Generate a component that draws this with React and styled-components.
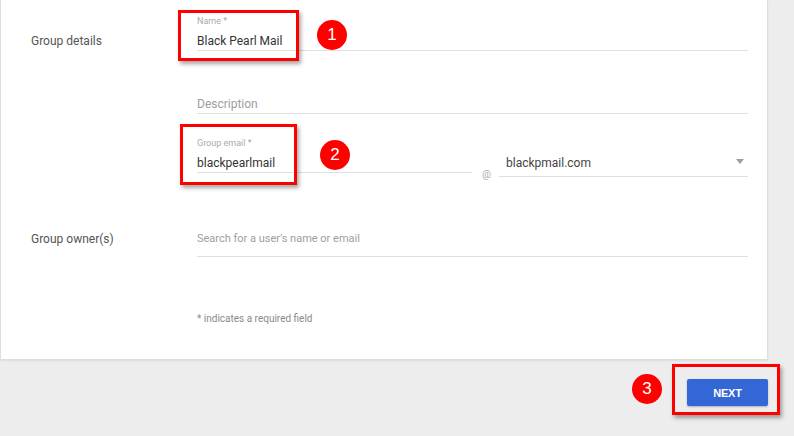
import React from "react";
import styled, { createGlobalStyle } from "styled-components";

const GlobalStyle = createGlobalStyle`
  html, body {
    margin: 0;
    padding: 0;
    background: #ededed;
    font-family: Roboto, "Liberation Sans", Arial, sans-serif;
  }
`;

const Page = styled.div`
  position: relative;
  width: 794px;
  height: 436px;
  overflow: hidden;
  display: flex;
  flex-direction: column;
`;

const Card = styled.div`
  width: 768px;
  background: #fff;
  border: 1px solid #dedede;
  border-top: none;
  border-radius: 0 0 2px 2px;
  box-shadow: 0 1px 2px rgba(0, 0, 0, 0.08);
  padding: 15px 19px 33px 30px;
  box-sizing: border-box;
`;

const Section = styled.div`
  display: grid;
  grid-template-columns: 166px 1fr;
  margin-top: ${(p) => p.$top || 0}px;
`;

const SectionLabel = styled.div`
  font-size: 12px;
  line-height: 18px;
  color: #555;
  padding-top: ${(p) => p.$offset || 0}px;
`;

const Fields = styled.div`
  display: flex;
  flex-direction: column;
`;

const Field = styled.div`
  display: flex;
  flex-direction: column;
  flex: ${(p) => (p.$grow ? 1 : "none")};
  margin-top: ${(p) => p.$top || 0}px;
`;

const FloatLabel = styled.div`
  font-size: 9px;
  line-height: 12px;
  height: 12px;
  color: #aaa;
  margin-bottom: 5px;
`;

const Value = styled.div`
  font-size: ${(p) => p.$size || 12}px;
  line-height: 18px;
  color: ${(p) => (p.$placeholder ? "#9e9e9e" : "#333")};
  padding-bottom: ${(p) => p.$pb || 0}px;
  border-bottom: 1px solid #e0e0e0;
  white-space: nowrap;
`;

const EmailRow = styled.div`
  display: flex;
  align-items: flex-start;
  margin-top: 23px;
`;

const At = styled.div`
  width: 27px;
  padding-top: 32px;
  padding-left: 10px;
  box-sizing: border-box;
  font-size: 10px;
  line-height: 12px;
  color: #aaa;
`;

const Select = styled.div`
  width: 249px;
  margin-top: 17px;
  display: flex;
  align-items: center;
  justify-content: space-between;
  padding: 0 4px 4px 7px;
  box-sizing: border-box;
  font-size: 12px;
  line-height: 18px;
  color: #444;
  border-bottom: 1px solid #e0e0e0;
`;

const Caret = styled.span`
  width: 0;
  height: 0;
  border-left: 4.5px solid transparent;
  border-right: 4.5px solid transparent;
  border-top: 5px solid #9e9e9e;
  margin-top: -4px;
`;

const Note = styled.div`
  font-size: 10px;
  line-height: 14px;
  color: #8a8a8a;
  margin-top: 55px;
`;

const Footer = styled.div`
  display: flex;
  justify-content: flex-end;
  padding: 19px 26px 0 0;
`;

const Button = styled.button`
  width: 81px;
  height: 27px;
  border: none;
  border-radius: 2px;
  background: #3367d6;
  color: #fff;
  font-family: "Liberation Sans", Arial, sans-serif;
  font-weight: 700;
  font-size: 11px;
  letter-spacing: -0.2px;
  box-shadow: 0 1px 2px rgba(0, 0, 0, 0.25);
  cursor: pointer;
`;

const Callout = styled.div`
  position: absolute;
  left: ${(p) => p.$x}px;
  top: ${(p) => p.$y}px;
  width: ${(p) => p.$w}px;
  height: ${(p) => p.$h}px;
  border: 3px solid #f00;
  box-sizing: border-box;
  box-shadow: 2px 3px 4px rgba(0, 0, 0, 0.35);
  pointer-events: none;
`;

const Marker = styled.div`
  position: absolute;
  left: ${(p) => p.$x}px;
  top: ${(p) => p.$y}px;
  width: 30px;
  height: 30px;
  border-radius: 50%;
  background: #f00;
  color: #fff;
  display: flex;
  align-items: center;
  justify-content: center;
  font-family: "Liberation Sans", Arial, sans-serif;
  font-size: 17px;
`;

export default function App() {
  return (
    <>
      <GlobalStyle />
      <Page>
        <Card>
          <Section>
            <SectionLabel $offset={17}>Group details</SectionLabel>
            <Fields>
              <Field>
                <FloatLabel>Name *</FloatLabel>
                <Value>Black Pearl Mail</Value>
              </Field>
              <Field $top={27}>
                <FloatLabel />
                <Value $placeholder>Description</Value>
              </Field>
              <EmailRow>
                <Field $grow>
                  <FloatLabel>Group email *</FloatLabel>
                  <Value>blackpearlmail</Value>
                </Field>
                <At>@</At>
                <Select>
                  blackpmail.com
                  <Caret />
                </Select>
              </EmailRow>
            </Fields>
          </Section>
          <Section $top={49}>
            <SectionLabel>Group owner(s)</SectionLabel>
            <Fields>
              <Value $placeholder $size={11} $pb={8}>
                Search for a user's name or email
              </Value>
              <Note>* indicates a required field</Note>
            </Fields>
          </Section>
        </Card>
        <Footer>
          <Button>NEXT</Button>
        </Footer>

        <Callout $x={178} $y={10} $w={121} $h={51} />
        <Marker $x={317} $y={20}>1</Marker>
        <Callout $x={180} $y={124} $w={117} $h={61} />
        <Marker $x={320} $y={140}>2</Marker>
        <Callout $x={672} $y={364} $w={108} $h={51} />
        <Marker $x={632} $y={374}>3</Marker>
      </Page>
    </>
  );
}
